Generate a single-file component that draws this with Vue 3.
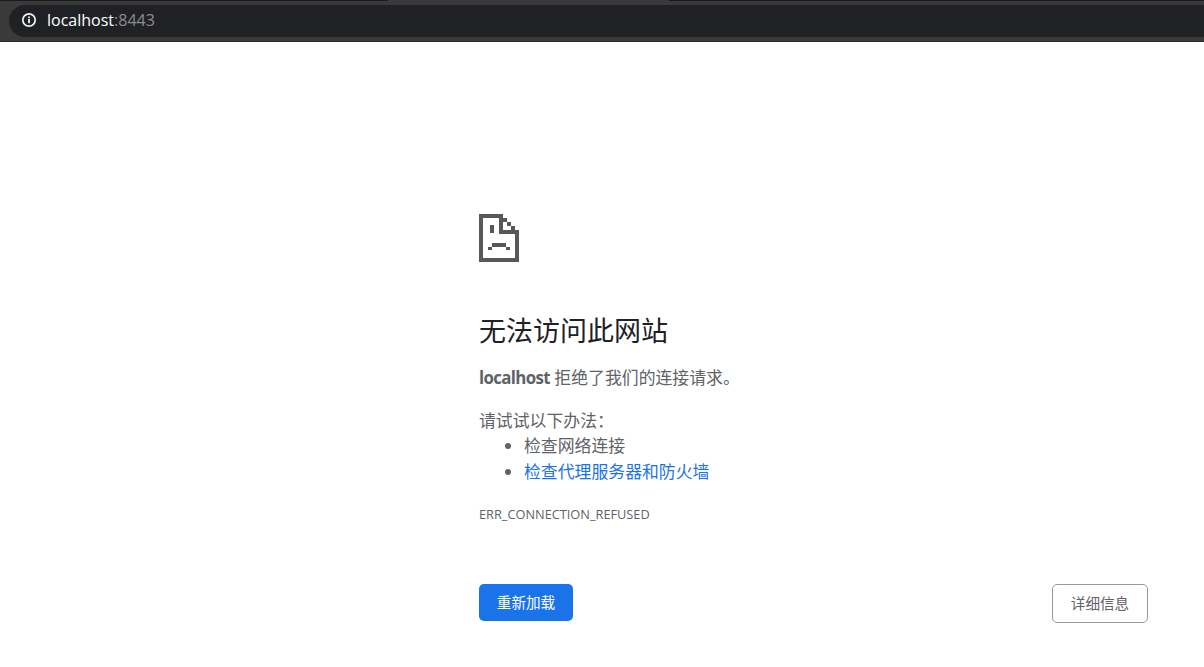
<script setup>
const suggestions = [
  { text: '检查网络连接', link: false },
  { text: '检查代理服务器和防火墙', link: true }
]
</script>

<template>
  <div class="page">
    <header class="toolbar">
      <div class="tabline"><span class="tab"></span></div>
      <div class="omnibox">
        <svg class="info" width="16" height="16" viewBox="0 0 16 16">
          <circle cx="8" cy="8" r="6.2" fill="none" stroke="#f1f3f4" stroke-width="1.7" />
          <rect x="7.1" y="7" width="1.8" height="4.2" fill="#f1f3f4" />
          <rect x="7.1" y="4.5" width="1.8" height="1.7" fill="#f1f3f4" />
        </svg>
        <span class="host">localhost</span><span class="port">:8443</span>
      </div>
    </header>
    <main class="main">
      <svg class="sad" width="40" height="48" viewBox="0 0 40 48" shape-rendering="crispEdges" fill="#585858">
        <rect x="0" y="0" width="24" height="4" />
        <rect x="0" y="0" width="4" height="48" />
        <rect x="0" y="44" width="40" height="4" />
        <rect x="36" y="16" width="4" height="32" />
        <rect x="20" y="0" width="4" height="20" />
        <rect x="20" y="16" width="20" height="4" />
        <rect x="24" y="4" width="4" height="4" />
        <rect x="28" y="8" width="4" height="4" />
        <rect x="32" y="12" width="4" height="4" />
        <rect x="11" y="11" width="4" height="8" />
        <rect x="13" y="29" width="14" height="4" />
        <rect x="9" y="33" width="4" height="3" />
        <rect x="27" y="33" width="4" height="3" />
      </svg>
      <h1 class="title">无法访问此网站</h1>
      <p class="summary"><strong class="strong">localhost</strong> 拒绝了我们的连接请求。</p>
      <p class="try">请试试以下办法：</p>
      <ul class="list">
        <li v-for="s in suggestions" :key="s.text">
          <a v-if="s.link" class="link">{{ s.text }}</a>
          <template v-else>{{ s.text }}</template>
        </li>
      </ul>
      <div class="code">ERR_CONNECTION_REFUSED</div>
      <div class="actions">
        <button class="reload">重新加载</button>
        <button class="details">详细信息</button>
      </div>
    </main>
  </div>
</template>

<style>
html, body { margin: 0; background: #fff; overflow: hidden; }
</style>

<style scoped>
.page {
  width: 1204px;
  height: 667px;
  font-family: "Open Sans", "Noto Sans CJK SC", sans-serif;
  color: #5f6368;
}
.toolbar {
  height: 41px;
  background: #3a3a3a;
  border-bottom: 1px solid #2a2a2a;
  box-sizing: content-box;
  display: flex;
  flex-direction: column;
}
.tabline {
  height: 1px;
  background: #1a1a1a;
  padding-left: 388px;
  margin-bottom: 4px;
}
.tab {
  display: block;
  width: 281px;
  height: 1px;
  background: #3a3a3a;
}
.omnibox {
  height: 32px;
  margin-left: 9px;
  background: #202124;
  border-radius: 16px 0 0 16px;
  display: flex;
  align-items: center;
  padding-left: 12px;
  padding-bottom: 2px;
  box-sizing: border-box;
  font-family: "Open Sans", sans-serif;
  font-size: 16px;
}
.info { margin-right: 10px; flex: none; }
.host { color: #fff; }
.port { color: #8a8c90; }
.main {
  padding: 172px 56px 0 479px;
  display: flex;
  flex-direction: column;
  align-items: flex-start;
}
.sad { display: block; }
.title {
  margin: 50px 0 0;
  font-size: 27px;
  line-height: 38px;
  font-weight: 400;
  color: #202124;
}
.summary {
  margin: 15px 0 0;
  font-size: 16.875px;
  line-height: 26px;
}
.strong { letter-spacing: -0.65px; }
.try {
  margin: 17px 0 0;
  font-size: 16.875px;
  line-height: 26px;
}
.list {
  margin: -1px 0 0;
  padding-left: 45px;
  font-size: 16.875px;
  line-height: 26px;
}
.link { color: #1a73e8; }
.code {
  margin-top: 20px;
  font-size: 12.77px;
  line-height: 18px;
  text-transform: uppercase;
}
.actions {
  margin-top: 61px;
  width: 669px;
  display: flex;
  justify-content: space-between;
  align-items: flex-start;
}
button {
  font-family: "Open Sans", "Noto Sans CJK SC", sans-serif;
  font-size: 14.625px;
  border-radius: 5px;
  box-sizing: border-box;
  padding: 0 0 2px;
  cursor: pointer;
}
.reload {
  width: 94px;
  height: 37px;
  background: #1a73e8;
  border: none;
  color: #fff;
}
.details {
  width: 96px;
  height: 39px;
  background: #fff;
  border: 1px solid #9a9a9e;
  color: #5f6368;
}
</style>
